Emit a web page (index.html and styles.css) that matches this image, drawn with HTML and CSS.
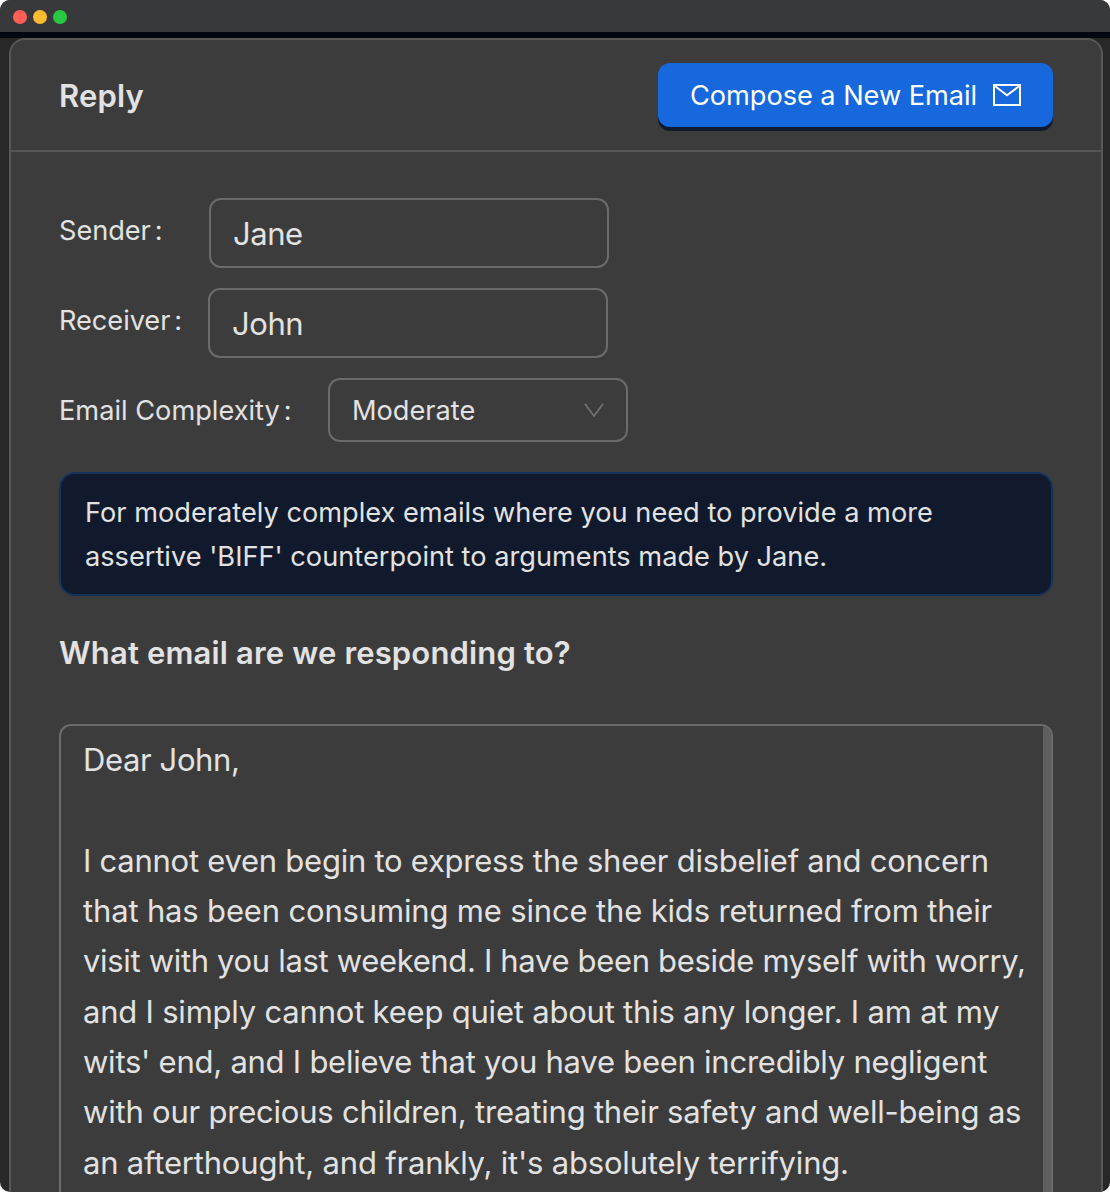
FILE: index.html
```html
<!DOCTYPE html>
<html lang="en">
<head>
<meta charset="utf-8">
<title>Reply</title>
<link rel="stylesheet" href="styles.css">
</head>
<body>
<div class="window">
  <div class="titlebar"><span class="light red"></span><span class="light amber"></span><span class="light green"></span></div>
  <main class="viewport">
    <section class="card">
      <header class="card-header">
        <h1 class="title"><span>Reply</span></h1>
        <button class="compose" type="button">
          <span class="compose-label">Compose a New Email</span>
          <svg class="mail" viewBox="0 0 28 22" width="28" height="22"><path d="M1 1H27V21H1ZM1.5 1.8L14 11.2L26.5 1.8" fill="none" stroke="#fff" stroke-width="2"/></svg>
        </button>
      </header>
      <div class="card-body">
        <div class="field sender"><span class="label"><span class="label-text">Sender</span><span class="colon">:</span></span><div class="input"><span>Jane</span></div></div>
        <div class="field receiver"><span class="label"><span class="label-text">Receiver</span><span class="colon">:</span></span><div class="input"><span>John</span></div></div>
        <div class="field complexity"><span class="label"><span class="label-text">Email Complexity</span><span class="colon">:</span></span>
          <div class="select"><span>Moderate</span><svg viewBox="0 0 20 15" width="20" height="15"><path d="M.9 .8L10 13L19.1 .8" fill="none" stroke="#717171" stroke-width="1.8"/></svg></div>
        </div>
        <div class="alert">For moderately complex emails where you need to provide a more<br>assertive 'BIFF' counterpoint to arguments made by Jane.</div>
        <h2 class="question">What email are we responding to?</h2>
        <div class="message">
          <div class="text">
            <p class="greeting">Dear John,</p>
            <p><span class="l1">I cannot even begin to express the sheer disbelief and concern</span><br><span class="l2">that has been consuming me since the kids returned from their</span><br><span class="l3">visit with you last weekend. I have been beside myself with worry,</span><br><span class="l4">and I simply cannot keep quiet about this any longer. I am at my</span><br><span class="l5">wits' end, and I believe that you have been incredibly negligent</span><br><span class="l6">with our precious children, treating their safety and well-being as</span><br><span class="l7">an afterthought, and frankly, it's absolutely terrifying.</span></p>
          </div>
          <div class="scrollbar"></div>
        </div>
      </div>
    </section>
  </main>
</div>
</body>
</html>
```
FILE: styles.css
```css
* { box-sizing: border-box; }
body { margin: 0; background: #fff; color: #e2e2e2; font: 400 27.2px/44px Inter, "Liberation Sans", sans-serif; }
h1, h2, p { margin: 0; }
.window { height: 1192px; border-radius: 10px; overflow: hidden; background: #282828; display: flex; flex-direction: column; }
.titlebar { flex: none; height: 38px; padding: 2px 13px 0; display: flex; align-items: center; gap: 6px; background: #38393a; border-bottom: 6px solid #020611; }
.light { width: 14px; height: 14px; border-radius: 50%; }
.red { background: #ff5f57; }
.amber { background: #febc2e; }
.green { background: #28c840; }
.viewport { flex: 1; min-height: 0; padding: 0 7px 0 9px; display: flex; }
.card { flex: 1; min-width: 0; border: 2px solid #585858; border-bottom: 0; border-radius: 16px 16px 0 0; background: #3c3c3c; display: flex; flex-direction: column; }
.card-header { flex: none; height: 112px; padding: 0 48px; border-bottom: 2px solid #585858; display: flex; align-items: center; justify-content: space-between; }
.title { font-size: 31px; font-weight: 600; line-height: 50px; padding-top: 2px; letter-spacing: .14px; }
.compose { width: 395px; height: 64px; border: 0; border-radius: 12px; background: #1668dc; box-shadow: 0 4px 0 #111a2c; color: #fff; font: inherit; padding: 0 32px; display: flex; align-items: center; justify-content: space-between; white-space: nowrap; }
.compose-label { padding-top: 1px; letter-spacing: -.05px; }
.card-body { flex: 1; min-height: 0; padding: 46px 48px 0; display: flex; flex-direction: column; }
.field { flex: none; display: flex; margin-bottom: 20px; white-space: nowrap; }
.label { display: flex; width: 150px; height: 64px; padding-top: 2px; align-items: center; gap: 4px; }
.sender .label, .receiver .label { letter-spacing: -.05px; }
.receiver .label { width: 149px; }
.complexity .label { width: 269px; }
.input { width: 400px; height: 70px; border: 2px solid #6b6b6b; border-radius: 12px; padding: 1px 22px 0; font-size: 31px; letter-spacing: -.44px; display: flex; align-items: center; }
.select { width: 300px; height: 64px; border: 2px solid #6b6b6b; border-radius: 12px; padding: 0 22px; display: flex; align-items: center; justify-content: space-between; }
.select span { padding-top: 1px; }
.alert { flex: none; height: 124px; margin-top: 10px; padding: 17px 24px 0; border: 2px solid #15325b; border-radius: 16px; background: #111a2c; white-space: nowrap; }
.question { flex: none; font-size: 31px; font-weight: 600; line-height: 50px; margin: 32px 0 46px; letter-spacing: .16px; white-space: nowrap; }
.message { flex: 1; min-height: 0; border: 2px solid #6b6b6b; border-bottom: 0; border-radius: 12px 12px 0 0; display: flex; justify-content: space-between; overflow: hidden; }
.text { padding: 9.3px 0 0 22px; font-size: 31px; line-height: 50.3px; white-space: nowrap; overflow: hidden; }
.text p + p { margin-top: 50.3px; }
.greeting { letter-spacing: -.39px; }
.l1 { letter-spacing: -.255px; }
.l2 { letter-spacing: -.162px; }
.l3 { letter-spacing: -.332px; }
.l4 { letter-spacing: -.21px; }
.l5 { letter-spacing: -.247px; }
.l6 { letter-spacing: -.213px; }
.l7 { letter-spacing: -.193px; }
.scrollbar { flex: none; width: 8px; background: #5f5f5f; }
```
